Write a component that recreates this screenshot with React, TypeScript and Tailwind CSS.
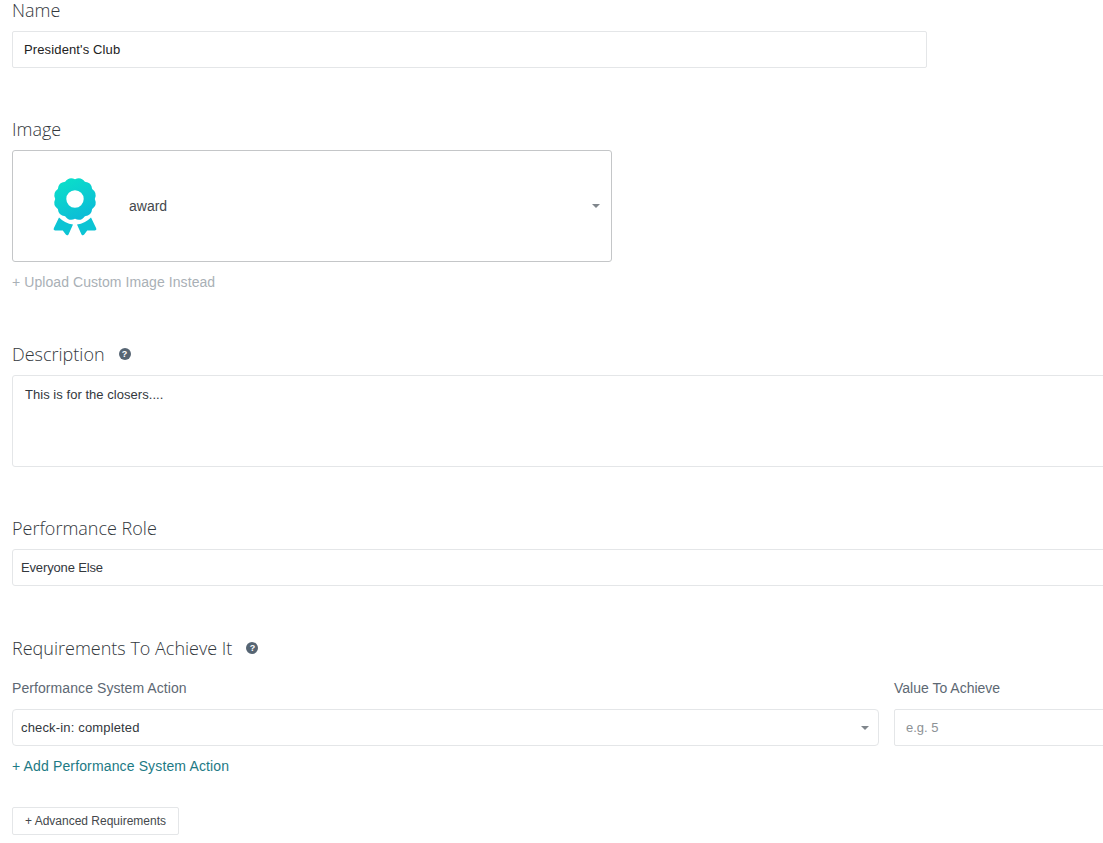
const sans = 'font-["Liberation_Sans",Arial,sans-serif]';
const heading = 'font-["Open_Sans",sans-serif] font-light text-[18px] leading-[20px] text-[#33383d]';

function HelpIcon() {
  return (
    <span className={`ml-[14px] inline-flex h-[12px] w-[12px] items-center justify-center rounded-full bg-[#566573] text-[9px] leading-none font-bold text-white ${sans}`}>
      ?
    </span>
  );
}

function Caret() {
  return <span className="h-0 w-0 border-x-[4px] border-t-[4px] border-x-transparent border-t-[#80868c]" />;
}

// scalloped seal outline, twelve shallow bumps round the disc
function sealPath() {
  const n = 12;
  const point = (r: number, a: number) => `${(23 + r * Math.cos(a)).toFixed(2)} ${(23 + r * Math.sin(a)).toFixed(2)}`;
  let d = `M${point(19.8, -Math.PI / 2)}`;
  for (let i = 0; i < n; i++) {
    const a = -Math.PI / 2 + (i * 2 * Math.PI) / n;
    d += ` Q${point(23.4, a + Math.PI / n)} ${point(19.8, a + (2 * Math.PI) / n)}`;
  }
  return d + ' Z';
}

function AwardIcon() {
  return (
    <svg width="46" height="60" viewBox="0 0 46 60" className="shrink-0">
      <defs>
        <linearGradient id="award" x1="0.25" y1="0" x2="0.75" y2="1">
          <stop offset="0" stopColor="#0adfc9" />
          <stop offset="1" stopColor="#0cbad8" />
        </linearGradient>
      </defs>
      <path d={`${sealPath()} M23 14.3 A8.7 8.7 0 1 0 23 31.7 A8.7 8.7 0 1 0 23 14.3 Z`} fill="url(#award)" fillRule="evenodd" />
      <path
        d="M7 41.5 Q13 47.5 21 48.5 L16.5 58.4 Q15.2 60 13.8 58.6 L10.8 54.5 L3 54.5 Q1 54.2 1.8 52.2 Z"
        fill="#0cc4d4"
      />
      <path
        d="M39 41.5 Q33 47.5 25 48.5 L29.5 58.4 Q30.8 60 32.2 58.6 L35.2 54.5 L43 54.5 Q45 54.2 44.2 52.2 Z"
        fill="#0cc4d4"
      />
    </svg>
  );
}

export default function App() {
  return (
    <div className={`h-[843px] w-[1103px] overflow-hidden bg-white pl-[12px] text-[13px] ${sans}`}>
      <div className="w-[1200px]">
        <h3 className={heading}>Name</h3>
        <div className="mt-[11px] flex h-[37px] w-[915px] items-center rounded-[2px] border border-[#e4e6e8] px-[11px] tracking-[0.13px] text-[#222]">
          President's Club
        </div>

        <h3 className={`${heading} mt-[51px]`}>Image</h3>
        <div className="mt-[11px] flex h-[112px] w-[600px] items-center rounded-[3px] border border-[#c4c6c8] pr-[11px] pl-[39px]">
          <AwardIcon />
          <span className="ml-[31px] flex-1 text-[14px] text-[#44484c]">award</span>
          <Caret />
        </div>
        <p className="mt-[12px] text-[14px] leading-[16px] tracking-[0.07px] text-[#a9b0b6]">+ Upload Custom Image Instead</p>

        <h3 className={`${heading} mt-[54px] flex items-center`}>Description<HelpIcon /></h3>
        <div className="mt-[11px] h-[92px] rounded-[3px] border border-[#e4e6e8] px-[12px] py-[10px] leading-[18px] tracking-[0.04px] text-[#33383d]">
          This is for the closers....
        </div>

        <h3 className={`${heading} mt-[51px]`}>Performance Role</h3>
        <div className="mt-[11px] flex h-[37px] items-center rounded-[3px] border border-[#e4e6e8] px-[8px] tracking-[-0.15px] text-[#33383d]">
          Everyone Else
        </div>

        <h3 className={`${heading} mt-[52px] flex items-center`}>Requirements To Achieve It<HelpIcon /></h3>
        <div className="mt-[22px] flex gap-[15px]">
          <div className="w-[867px]">
            <p className="text-[14px] leading-[16px] tracking-[0.08px] text-[#5d6873]">Performance System Action</p>
            <div className="mt-[13px] flex h-[37px] items-center justify-between rounded-[4px] border border-[#e4e6e8] pr-[9px] pl-[8px] tracking-[0.16px] text-[#33383d]">
              check-in: completed
              <Caret />
            </div>
          </div>
          <div className="flex-1">
            <p className="text-[14px] leading-[16px] text-[#5d6873]">Value To Achieve</p>
            <div className="mt-[13px] flex h-[37px] items-center rounded-[2px] border border-[#e4e6e8] px-[11px] text-[#8d9296]">
              e.g. 5
            </div>
          </div>
        </div>
        <p className="mt-[12px] text-[14px] leading-[16px] tracking-[0.14px] text-[#1d7a85]">+ Add Performance System Action</p>
        <button className="mt-[33px] flex h-[28px] w-[167px] items-center justify-center rounded-[2px] border border-[#e4e6e8] text-[12px] text-[#44484c]">
          + Advanced Requirements
        </button>
      </div>
    </div>
  );
}
